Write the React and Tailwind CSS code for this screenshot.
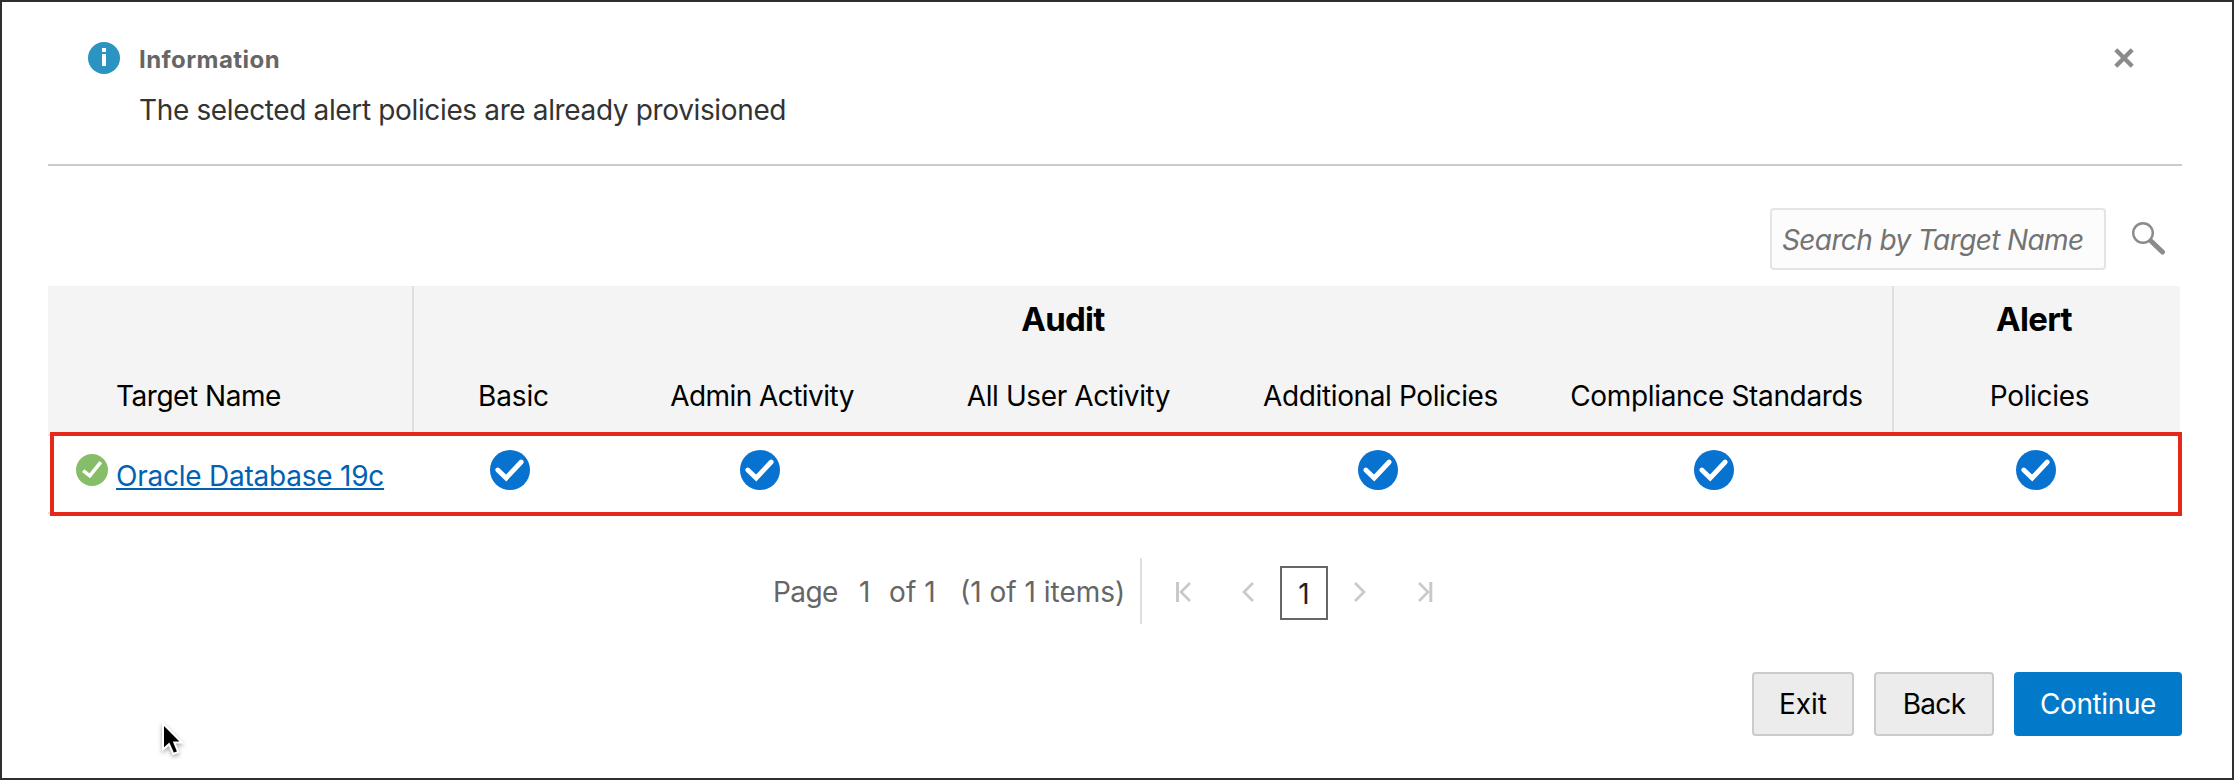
const CELL = "border-[#dfdfdf] text-center";

const columns = [
  { name: "Basic", group: "", on: true, first: true, tracking: "tracking-[-0.15px]", nudge: "pl-[5px]" },
  { name: "Admin Activity", group: "", on: true, tracking: "tracking-[-0.55px]", nudge: "pl-[4px]" },
  { name: "All User Activity", group: "Audit", on: false, tracking: "tracking-[-0.41px]", nudge: "pl-[5px]" },
  { name: "Additional Policies", group: "", on: true, tracking: "tracking-[-0.38px]", nudge: "pl-[5px]" },
  { name: "Compliance Standards", group: "", on: true, tracking: "tracking-[-0.34px]", nudge: "pl-[5px]" },
  { name: "Policies", group: "Alert", on: true, first: true, tracking: "tracking-[-0.31px]", nudge: "pl-[5px]" },
];

const GRID = "grid grid-cols-[364px_196px_304px_308px_316px_356px_288px]";

function InfoIcon() {
  return (
    <svg className="size-8 shrink-0" viewBox="0 0 32 32">
      <circle cx="16" cy="16" r="16" fill="#2b94c1" />
      <path d="M14 6h4v4h-4zM14 12h4v12h-4z" fill="#fff" />
    </svg>
  );
}

function StatusIcon() {
  return (
    <svg className="mt-[18px] size-8 shrink-0" viewBox="0 0 32 32">
      <circle cx="16" cy="16" r="16" fill="#86bd68" />
      <path d="M7.2 16.6l6.6 5.2L24.8 8.2" fill="none" stroke="#fff" strokeWidth="3.6" />
    </svg>
  );
}

function BlueCheck() {
  return (
    <svg className="size-10" viewBox="0 0 40 40">
      <circle cx="20" cy="20" r="20" fill="#0872d0" />
      <path d="M7.8 20l8.4 8L31.2 12" fill="none" stroke="#fff" strokeWidth="4.8" strokeLinecap="round" />
    </svg>
  );
}

function Arrow({ d, bar, className }) {
  return (
    <svg className={`h-5 shrink-0 ${className}`} fill="none" stroke="#c9c9c9" strokeWidth="2.6">
      {bar && <path d={bar} strokeWidth="3" />}
      <path d={d} />
    </svg>
  );
}

export default function App() {
  return (
    <div className="flex h-[780px] w-[2234px] flex-col overflow-hidden border-2 border-[#302e30] bg-white pr-[50px] pl-[46px] font-['Inter',sans-serif] text-[28px] leading-[40px] text-black">
      <section className="flex h-[164px] shrink-0 border-b-2 border-[#cbcbcb] pt-10 pl-10">
        <InfoIcon />
        <div className="grow pt-[2px] pl-[19px]">
          <h1 className="text-[24px] leading-8 font-bold tracking-[0.44px] text-[#666]">Information</h1>
          <p className="mt-[14px] tracking-[-0.36px] text-[#333]">The selected alert policies are already provisioned</p>
        </div>
        <svg className="mt-[6px] mr-[48px] size-5" viewBox="0 0 20 20" stroke="#8b8b8d" strokeWidth="4.4">
          <path d="M1.8 1.8l16.4 16.4M18.2 1.8L1.8 18.2" />
        </svg>
      </section>

      <div className="flex h-[120px] shrink-0 items-start justify-end pt-[42px]">
        <div className="h-[62px] w-[336px] rounded-[4px] border-2 border-[#e4e4e4] bg-[#fcfcfc] pt-[10px] pl-[10px] tracking-[-0.62px] whitespace-nowrap text-[#737373] italic">
          Search by Target Name
        </div>
        <svg className="mt-[13px] mr-[16px] ml-[25px] h-[35px] w-[35px]" viewBox="0 0 35 35" fill="none" stroke="#8b8b8d">
          <circle cx="12" cy="12" r="9.8" strokeWidth="2.4" />
          <path d="M20.5 20.5L31.5 31" strokeWidth="5" strokeLinecap="round" />
        </svg>
      </div>

      <div className="w-[2132px]">
        <div className={`${GRID} h-[148px] grid-rows-[68px_80px] bg-[#f4f4f4]`}>
          <div />
          {columns.map((c) => (
            <div key={c.name} className={`${CELL} ${c.first ? "border-l-2" : ""} pr-[6px] text-[33px] leading-[67px] font-bold tracking-[-0.7px]`}>
              {c.group}
            </div>
          ))}
          <div className="pt-[22px] pl-[68px] tracking-[-0.47px]">Target Name</div>
          {columns.map((c) => (
            <div key={c.name} className={`${CELL} ${c.first ? "border-l-2" : ""} pt-[22px] whitespace-nowrap ${c.tracking} ${c.nudge}`}>
              {c.name}
            </div>
          ))}
        </div>
        <div className={`${GRID} relative h-20 border-y-2 border-[#e2e2e2]`}>
          <div className="flex gap-2 pl-7">
            <StatusIcon />
            <a className="pt-[20px] tracking-[-0.23px] whitespace-nowrap text-[#0061b5] underline decoration-2 underline-offset-[2px]">Oracle Database 19c</a>
          </div>
          {columns.map((c) => (
            <div key={c.name} className="flex justify-center pt-[14px]">
              {c.on && <BlueCheck />}
            </div>
          ))}
          <div className="absolute -top-1 -right-[2px] -bottom-1 left-[2px] border-4 border-[#e52819]" />
        </div>
      </div>

      <nav className="mt-11 flex h-[66px] shrink-0 items-center pl-[725px] whitespace-nowrap text-[#666]">
        <span className="w-[86px] pt-px tracking-[-0.59px]">Page</span>
        <span className="w-[30px] pt-px">1</span>
        <span className="w-[71px] pt-px tracking-[0.1px]">of 1</span>
        <span className="w-[180px] pt-px">(1 of 1 items)</span>
        <span className="h-full w-[2px] bg-[#dfdfdf]" />
        <Arrow className="mt-[2px] ml-[34px] w-[15px]" bar="M1.5 0v20" d="M14 1L5 10l9 9" />
        <Arrow className="mt-[2px] ml-[51px] w-[12px]" d="M11 1L2 10l9 9" />
        <span className="mt-1 ml-[26px] h-[54px] w-12 border-2 border-[#666] pt-[6px] text-center text-[#222]">1</span>
        <Arrow className="mt-[2px] ml-[26px] w-[12px]" d="M1 1l9 9-9 9" />
        <Arrow className="mt-[2px] ml-[52px] w-[15px]" bar="M12.8 0v20" d="M1 1l9 9-9 9" />
      </nav>

      <div className="mt-12 flex h-16 shrink-0 justify-end gap-5">
        <button className="w-[102px] rounded-[4px] border-2 border-[#cbcbcb] bg-[#ececec]">Exit</button>
        <button className="w-[120px] rounded-[4px] border-2 border-[#cbcbcb] bg-[#ececec] tracking-[-0.68px]">Back</button>
        <button className="w-[168px] rounded-[4px] bg-[#037ac9] tracking-[-0.4px] text-white">Continue</button>
      </div>

      <svg className="absolute top-[722px] left-[158px] h-[38px] w-[30px] drop-shadow-[0_2px_2px_rgba(0,0,0,0.35)]" viewBox="0 0 30 38">
        <path d="M5 1.5v26l6-5.3 4.3 9.8 5-2-4-9.5h7.5z" fill="#000" stroke="#fff" strokeWidth="2" />
      </svg>
    </div>
  );
}
